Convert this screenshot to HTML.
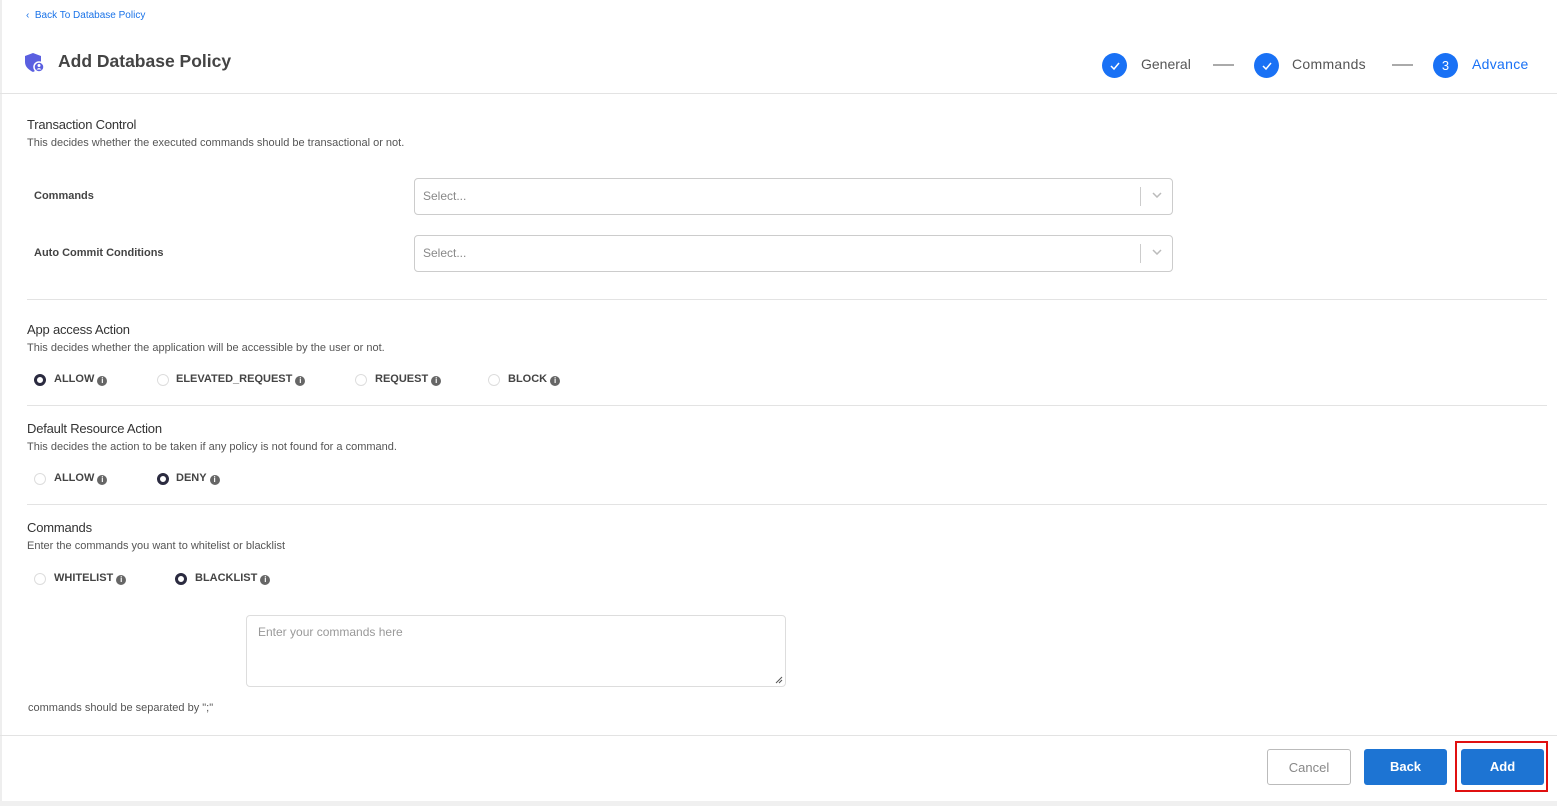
<!DOCTYPE html>
<html><head><meta charset="utf-8"><style>
*{box-sizing:border-box;margin:0;padding:0}
body{width:1557px;height:806px;position:relative;background:#fff;font-family:"Liberation Sans",sans-serif;overflow:hidden;color:#333}
.a{position:absolute;white-space:nowrap}
.h{font-size:13px;color:#333;letter-spacing:-0.2px}
.d{font-size:11px;color:#555}
.lbl{font-size:11px;font-weight:bold;color:#444}
.hr{position:absolute;left:27px;right:10px;height:1px;background:#e3e3e3}
.sel{position:absolute;left:414px;width:759px;height:37px;border:1px solid #ccc;border-radius:4px}
.sel span{position:absolute;left:8px;top:10px;font-size:12px;color:#888}
.sel i{position:absolute;right:31px;top:8px;width:1px;height:19px;background:#ccc}
.sel svg{position:absolute;right:10px;top:13px}
.r{position:absolute;width:12px;height:12px;border-radius:50%;border:1px solid #ddd;background:#fff}
.r.on{border:3.5px solid #2b2b40}
.o{position:absolute;font-size:11px;font-weight:bold;color:#444;white-space:nowrap}
.o b{display:inline-block;width:10px;height:10px;border-radius:50%;background:#666;color:#fff;font-size:8px;line-height:10px;text-align:center;vertical-align:-1px;margin-left:3px}
.c{position:absolute;width:25px;height:25px;border-radius:50%;background:#1971f5;color:#fff;text-align:center;font-size:13px;line-height:25px}
.st{position:absolute;font-size:14px;color:#555;top:56px}
.dash{position:absolute;top:64px;width:21px;height:2px;background:#aaa}
.btn{position:absolute;top:749px;height:36px;border-radius:3px;font-size:13px;font-weight:bold;text-align:center;line-height:36px}
</style></head><body>
<div class="a" style="left:0;top:0;width:2px;height:806px;background:#eee"></div>
<div class="a" style="left:26px;top:10px;font-size:10px;color:#1a73e8">&#8249;&nbsp; Back To Database Policy</div>
<svg class="a" style="left:24px;top:52px" width="22" height="22" viewBox="0 0 22 22"><path d="M9 1 L17 4 V10 C17 15 13 18 9 20 C5 18 1 15 1 10 V4 Z" fill="#5a5fe0"/><circle cx="15" cy="15" r="5" fill="#5a5fe0" stroke="#fff" stroke-width="1.5"/><circle cx="15" cy="13.5" r="1.5" fill="#fff"/><path d="M12.5 17.5 Q15 14.5 17.5 17.5" fill="#fff"/></svg>
<div class="a" style="left:58px;top:51px;font-size:17.5px;font-weight:bold;color:#444">Add Database Policy</div>
<div class="c" style="left:1102px;top:53px"><svg width="12" height="10" viewBox="0 0 12 10" style="margin-top:8px"><path d="M2 5 L5 8 L10 2" stroke="#fff" stroke-width="1.5" fill="none"/></svg></div><div class="st" style="left:1141px">General</div>
<div class="dash" style="left:1213px"></div>
<div class="c" style="left:1254px;top:53px"><svg width="12" height="10" viewBox="0 0 12 10" style="margin-top:8px"><path d="M2 5 L5 8 L10 2" stroke="#fff" stroke-width="1.5" fill="none"/></svg></div><div class="st" style="left:1292px;letter-spacing:0.3px">Commands</div>
<div class="dash" style="left:1392px"></div>
<div class="c" style="left:1433px;top:53px">3</div><div class="st" style="left:1472px;color:#1971f5;letter-spacing:0.3px">Advance</div>
<div class="a" style="left:0;right:0;top:93px;height:1px;background:#e3e3e3"></div>

<div class="a h" style="left:27px;top:117px">Transaction Control</div>
<div class="a d" style="left:27px;top:137px">This decides whether the executed commands should be transactional or not.</div>
<div class="a lbl" style="left:34px;top:190px">Commands</div>
<div class="sel" style="top:178px"><span>Select...</span><i></i><svg width="10" height="6"><path d="M1 1 L5 5 L9 1" stroke="#bbb" stroke-width="1.5" fill="none"/></svg></div>
<div class="a lbl" style="left:34px;top:247px">Auto Commit Conditions</div>
<div class="sel" style="top:235px"><span>Select...</span><i></i><svg width="10" height="6"><path d="M1 1 L5 5 L9 1" stroke="#bbb" stroke-width="1.5" fill="none"/></svg></div>
<div class="hr" style="top:299px"></div>

<div class="a h" style="left:27px;top:322px">App access Action</div>
<div class="a d" style="left:27px;top:342px">This decides whether the application will be accessible by the user or not.</div>
<div class="r on" style="left:34px;top:374px"></div><div class="o" style="left:54px;top:373px">ALLOW<b>i</b></div>
<div class="r" style="left:157px;top:374px"></div><div class="o" style="left:176px;top:373px">ELEVATED_REQUEST<b>i</b></div>
<div class="r" style="left:355px;top:374px"></div><div class="o" style="left:375px;top:373px">REQUEST<b>i</b></div>
<div class="r" style="left:488px;top:374px"></div><div class="o" style="left:508px;top:373px">BLOCK<b>i</b></div>
<div class="hr" style="top:405px"></div>

<div class="a h" style="left:27px;top:421px">Default Resource Action</div>
<div class="a d" style="left:27px;top:441px">This decides the action to be taken if any policy is not found for a command.</div>
<div class="r" style="left:34px;top:473px"></div><div class="o" style="left:54px;top:472px">ALLOW<b>i</b></div>
<div class="r on" style="left:157px;top:473px"></div><div class="o" style="left:176px;top:472px">DENY<b>i</b></div>
<div class="hr" style="top:504px"></div>

<div class="a h" style="left:27px;top:520px">Commands</div>
<div class="a d" style="left:27px;top:540px">Enter the commands you want to whitelist or blacklist</div>
<div class="r" style="left:34px;top:573px"></div><div class="o" style="left:54px;top:572px">WHITELIST<b>i</b></div>
<div class="r on" style="left:175px;top:573px"></div><div class="o" style="left:195px;top:572px">BLACKLIST<b>i</b></div>
<div class="a" style="left:246px;top:615px;width:540px;height:72px;border:1px solid #ddd;border-radius:4px"><span style="position:absolute;left:11px;top:9px;font-size:12px;color:#999">Enter your commands here</span><svg style="position:absolute;right:2px;bottom:2px" width="8" height="8"><path d="M1 7 L7 1 M4 7 L7 4" stroke="#555" stroke-width="1"/></svg></div>
<div class="a d" style="left:28px;top:702px">commands should be separated by ";"</div>

<div class="a" style="left:0;right:0;top:735px;height:1px;background:#e3e3e3"></div>
<div class="btn" style="left:1267px;width:84px;border:1px solid #bbb;color:#888;font-weight:normal">Cancel</div>
<div class="btn" style="left:1364px;width:83px;background:#1d74d3;color:#fff">Back</div>
<div class="a" style="left:1455px;top:741px;width:93px;height:51px;border:2px solid #e01010"></div>
<div class="btn" style="left:1461px;width:83px;background:#1d74d3;color:#fff">Add</div>
<div class="a" style="left:0;right:0;top:801px;height:5px;background:#f0f0f0"></div>
</body></html>
